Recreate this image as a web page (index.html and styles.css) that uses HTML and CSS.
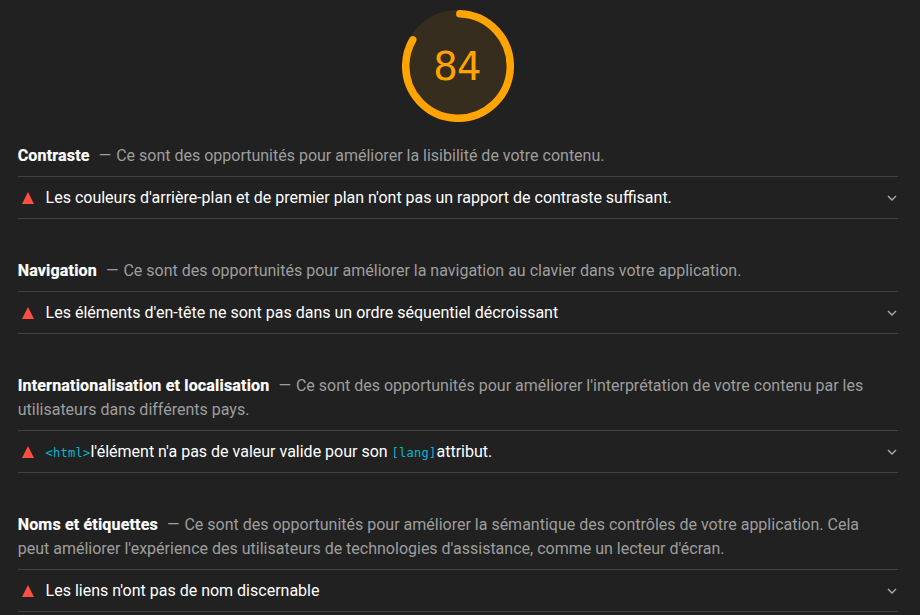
FILE: index.html
```html
<!DOCTYPE html>
<html lang="fr">
<head>
<meta charset="utf-8">
<title>Accessibilité</title>
<link rel="stylesheet" href="styles.css">
</head>
<body>
<main class="report">
  <div class="gauge">
    <svg class="gauge-svg" viewBox="0 0 120 120">
      <circle class="gauge-base" cx="60" cy="60" r="56"/>
      <circle class="gauge-arc" cx="60" cy="60" r="56" pathLength="100" transform="rotate(-88 60 60)"/>
    </svg>
    <span class="score">84</span>
  </div>

  <section class="group">
    <p class="header"><span class="title">Contraste</span><span class="desc">Ce sont des opportunités pour améliorer la lisibilité de votre contenu.</span></p>
    <div class="audit"><span class="triangle"></span><span class="text">Les couleurs d'arrière-plan et de premier plan n'ont pas un rapport de contraste suffisant.</span><svg class="chevron" viewBox="0 0 10 6"><path d="M1 1l4 4 4-4"/></svg></div>
  </section>

  <section class="group">
    <p class="header"><span class="title">Navigation</span><span class="desc">Ce sont des opportunités pour améliorer la navigation au clavier dans votre application.</span></p>
    <div class="audit"><span class="triangle"></span><span class="text">Les éléments d'en-tête ne sont pas dans un ordre séquentiel décroissant</span><svg class="chevron" viewBox="0 0 10 6"><path d="M1 1l4 4 4-4"/></svg></div>
  </section>

  <section class="group">
    <p class="header"><span class="title">Internationalisation et localisation</span><span class="desc">Ce sont des opportunités pour améliorer l'interprétation de votre contenu par les utilisateurs dans différents pays.</span></p>
    <div class="audit"><span class="triangle"></span><span class="text"><code>&lt;html&gt;</code>l'élément n'a pas de valeur valide pour son <code>[lang]</code>attribut.</span><svg class="chevron" viewBox="0 0 10 6"><path d="M1 1l4 4 4-4"/></svg></div>
  </section>

  <section class="group">
    <p class="header"><span class="title">Noms et étiquettes</span><span class="desc">Ce sont des opportunités pour améliorer la sémantique des contrôles de votre application. Cela peut améliorer l'expérience des utilisateurs de technologies d'assistance, comme un lecteur d'écran.</span></p>
    <div class="audit"><span class="triangle"></span><span class="text">Les liens n'ont pas de nom discernable</span><svg class="chevron" viewBox="0 0 10 6"><path d="M1 1l4 4 4-4"/></svg></div>
  </section>
</main>
</body>
</html>
```
FILE: styles.css
```css
body {
  margin: 0;
  background: #212121;
  color: #fff;
  font: 16px/24px Roboto, sans-serif;
}
.report {
  padding: 10px 22px 0 17.7px;
}
.gauge {
  display: grid;
  place-items: center;
  width: 112px;
  height: 112px;
  margin: 0 auto 22px;
}
.gauge-svg, .score {
  grid-area: 1 / 1;
}
.gauge-svg {
  width: 112px;
  height: 112px;
}
.gauge-base {
  fill: #372d1e;
  stroke: #372d1e;
  stroke-width: 8;
}
.gauge-arc {
  fill: none;
  stroke: #ffa400;
  stroke-width: 8;
  stroke-linecap: round;
  stroke-dasharray: 82.8 100;
}
.score {
  margin-right: 1.5px;
  padding-top: 2px;
  color: #ffa400;
  font: 38.5px/56px "DejaVu Sans", sans-serif;
  letter-spacing: -0.7px;
}
.group + .group {
  margin-top: 40px;
}
.header {
  margin: 0 0 8px;
  padding-right: 12px;
}
.title {
  font-weight: 700;
  -webkit-text-stroke: 0.2px #fff;
  letter-spacing: 0.18px;
}
.desc {
  color: #9e9e9e;
}
.desc::before {
  content: "—";
  margin: 0 5px 0 9px;
}
.audit {
  display: flex;
  align-items: center;
  height: 41px;
  border: solid #424242;
  border-width: 1px 0;
}
.triangle {
  border: 6px solid transparent;
  border-top: 0;
  border-bottom: 12px solid #ff4e42;
  margin: 0 11.6px 0 4.3px;
}
.text {
  flex: 1;
}
.text code {
  color: #00b8d4;
  font: 12px "DejaVu Sans Mono", monospace;
  letter-spacing: 0.25px;
}
.chevron {
  width: 10px;
  height: 6px;
  margin-right: 1px;
  fill: none;
  stroke: #aaa;
  stroke-width: 1.4;
}
```
